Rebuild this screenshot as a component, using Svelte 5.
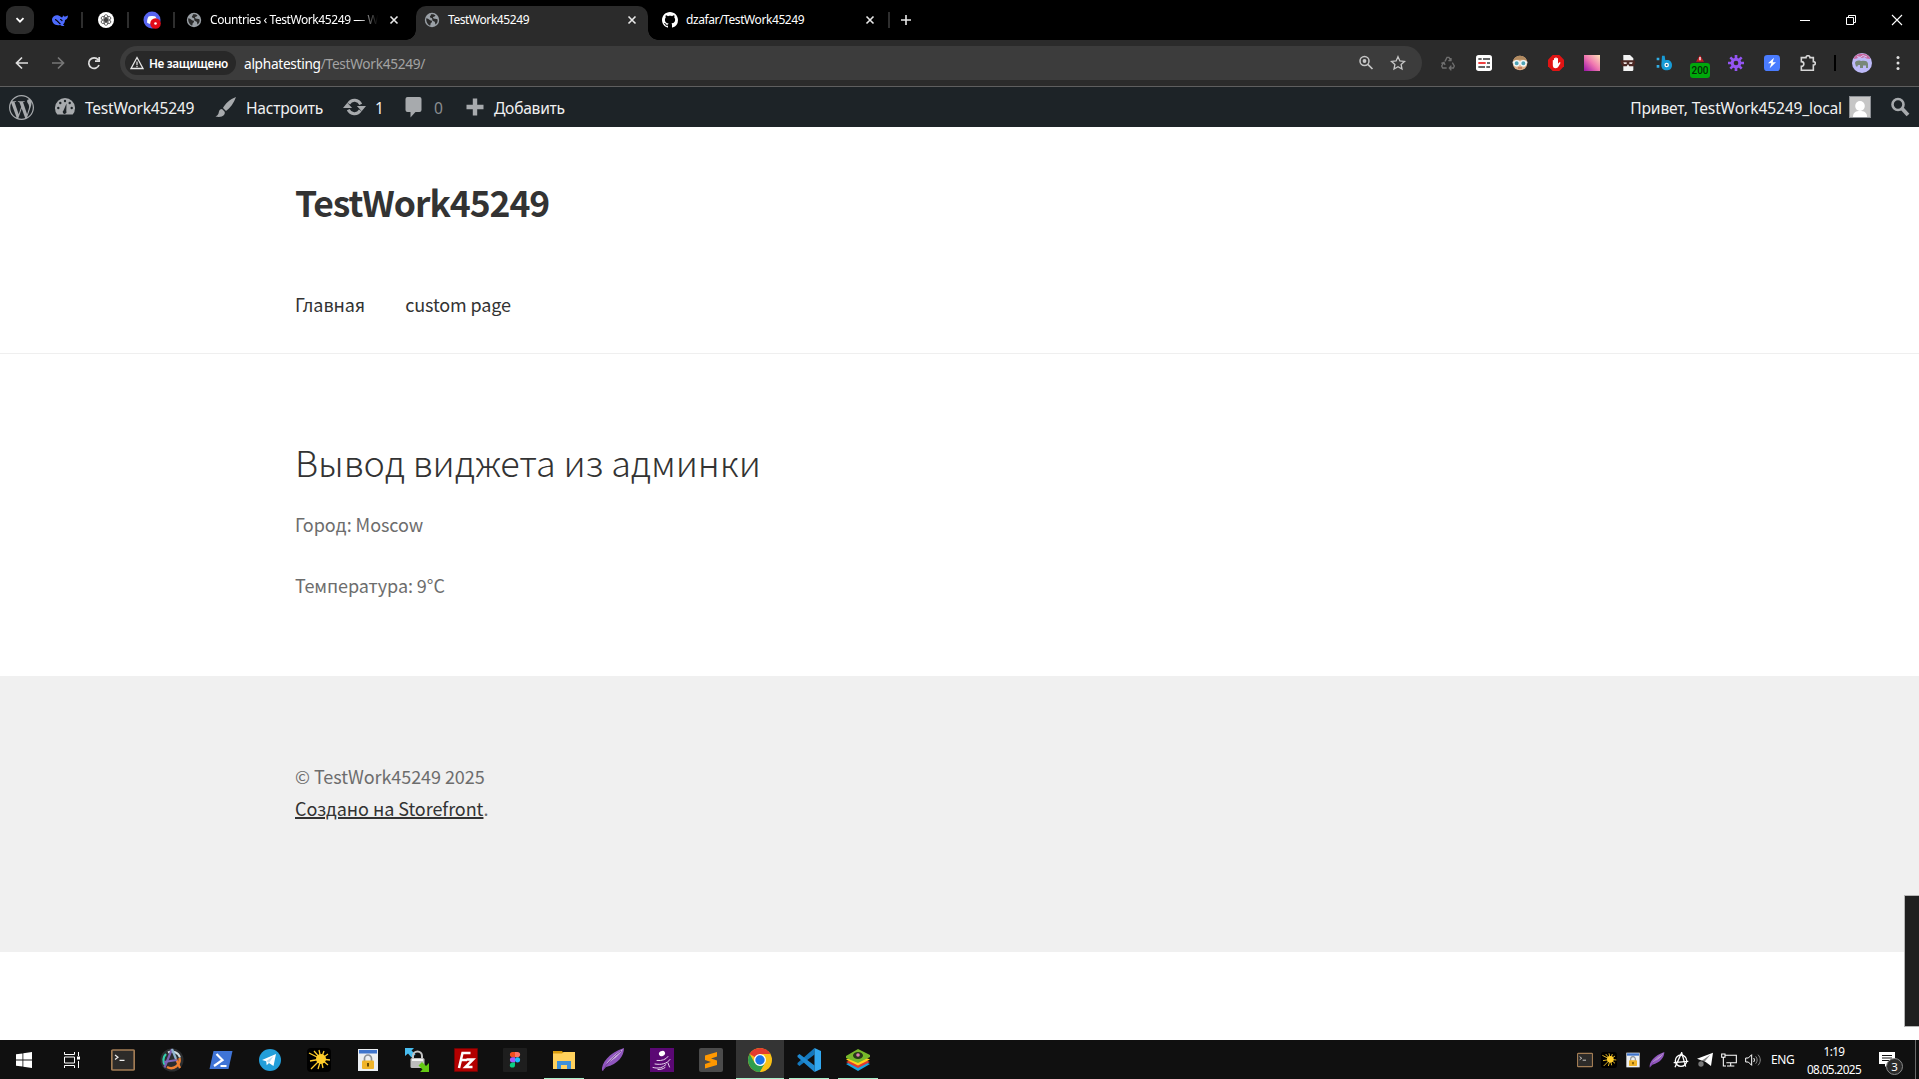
<script>
  const extensions = ['recycle', 'list', 'face', 'hand', 'gradient', 'mask', 'whale', 'alarm', 'gear', 'bolt', 'puzzle'];
  const apps = [
    { icon: 'terminal' },
    { icon: 'agent' },
    { icon: 'powershell' },
    { icon: 'telegram' },
    { icon: 'sun' },
    { icon: 'lockdoc' },
    { icon: 'transfer' },
    { icon: 'filezilla' },
    { icon: 'figma' },
    { icon: 'folder', open: true },
    { icon: 'feather' },
    { icon: 'pipes' },
    { icon: 'sublime' },
    { icon: 'chrome', open: true, focused: true },
    { icon: 'vscode', open: true },
    { icon: 'stacks', open: true },
  ];
  const tray = ['terminal', 'sun', 'lockdoc', 'feather', 'anarchy', 'plane', 'network', 'volume'];
</script>

{#snippet globe()}
  <svg class="i16" viewBox="0 0 16 16">
    <circle cx="8" cy="8" r="7.2" fill="#9aa0a6" />
    <path d="M2.3 6.2c1.4.2 2.2.7 3.1 1.6.8.8 2.2.4 2.6 1.4.3 1-1 1.400-1.400 2.300-.3.8.2 1.700-.6 2C3.600 12.800 1.800 9.400 2.300 6.200zM7 2.300c1.700-.4 3.300.1 4.400 1-.2 1.200-1.500 1.300-2.200 1.800-.7.6.200 1.500 1.200 1.700 1.200.2 2.200 0 3.200.7.3 2-.5 4-2 5-.6-.6-.2-1.600-.8-2.500-.6-.8-1.800-.6-2.300-1.400-.5-.9.1-1.600-.5-2.300C7.400 5.700 6.100 5.900 5.900 5c-.1-.9 1.200-1.300 1.100-2.700z" fill="#2b2b2b" />
  </svg>
{/snippet}

{#snippet close()}
  <svg class="i16" viewBox="0 0 16 16"><path d="M4.500 4.500l7 7M11.500 4.500l-7 7" stroke="#e8e8e8" stroke-width="1.600" /></svg>
{/snippet}

{#snippet icon(name)}
  <svg viewBox="0 0 24 24" class="glyph">
    {#if name === 'recycle'}
      <g fill="none" stroke="#6f6f6f" stroke-width="2">
        <path d="M7.500 9.500l3-6h3l2.500 5M12.500 8.500h4v-4M18.500 11.500l3 5-1.500 3h-6M17 16l-3 3.500L17 23M10 19.500H4l-1.500-3 3-5M2 12.500l4-1.500L7.500 15" />
      </g>
    {:else if name === 'list'}
      <rect width="24" height="24" rx="4" fill="#fff" />
      <path d="M3.500 6h5M10.500 6H21M3.500 18h10M15.500 18H21" stroke="#333" stroke-width="2.200" />
      <path d="M3.500 12h11" stroke="#e33" stroke-width="2.800" /><path d="M16.500 12H21" stroke="#333" stroke-width="2.200" />
    {:else if name === 'face'}
      <circle cx="12" cy="12" r="11" fill="#e0b088" />
      <path d="M2 9C3 3 8 1 12 1s9 2 10 8l-4-2H6z" fill="#b08a60" />
      <path d="M1 11h22" stroke="#e9f2f4" stroke-width="2.500" />
      <circle cx="7" cy="12.500" r="4" fill="#4fa3b5" stroke="#f2f7f8" stroke-width="2" /><circle cx="17" cy="12.500" r="4" fill="#4fa3b5" stroke="#f2f7f8" stroke-width="2" />
      <path d="M9 19.500h6" stroke="#a34c3c" stroke-width="1.500" />
    {:else if name === 'hand'}
      <path d="M7 0h10l7 7v10l-7 7H7l-7-7V7z" fill="#e01414" />
      <path d="M7.200 8a1 1 0 0 1 1.800 0V5.500a1 1 0 0 1 2 0V4.500a1 1 0 0 1 2 0v1a1 1 0 0 1 2 0V13l2-2c1-.8 2 .2 1.500 1.200L16 17c-1 2-2.500 3-4.500 3-3 0-4.300-2-4.300-5z" fill="#fff" />
    {:else if name === 'gradient'}
      <defs><linearGradient id="pinkfade" x1="0" y1="1" x2="1" y2="0"><stop offset="0" stop-color="#9a12a8" /><stop offset=".5" stop-color="#f078b0" /><stop offset="1" stop-color="#ffe3b8" /></linearGradient></defs>
      <rect width="24" height="24" fill="url(#pinkfade)" />
    {:else if name === 'mask'}
      <path d="M5 0h10l5 5v17a2 2 0 0 1-2 2H5z" fill="#f3f3f3" />
      <path d="M1 8h21l1 3-2 6h-7l-2-3-2 3H4L1 12z" fill="#4a2723" />
      <path d="M5 11h5v2.500H6zM14 11h5l-1 2.500h-4z" fill="#e8dedc" />
    {:else if name === 'whale'}
      <path d="M9 1h4l1 7c7-2 10 3 10 7 0 6-4 8-8 8-5 0-8-3-8-8z" fill="#179bd7" />
      <circle cx="16" cy="15" r="3.400" fill="#fff" /><circle cx="16" cy="15" r="1.400" fill="#16587e" />
      <path d="M1 4h4v4H1zM1 15h4v4H1z" fill="#32aee5" />
    {:else if name === 'alarm'}
      <path d="M12 0l6 10H6z" fill="#c21d24" /><path d="M12 3v5" stroke="#fff" stroke-width="2" />
    {:else if name === 'gear'}
      <g stroke="#9455f2" stroke-width="4"><path d="M12 0v24M0 12h24M3.500 3.500l17 17M20.500 3.500l-17 17" /></g>
      <circle cx="12" cy="12" r="8" fill="#9455f2" /><circle cx="12" cy="12" r="3.500" fill="#2b2b2b" />
    {:else if name === 'bolt'}
      <rect width="24" height="24" rx="5" fill="#4a7cff" /><path d="M15 4L6 12.500h5L8.500 20 18 11h-5z" fill="#fff" />
    {:else if name === 'puzzle'}
      <path d="M2 4h7c0-4 6-4 6 0h5v6c4 0 4 5 0 5v8H2v-6c5 0 5-7 0-7z" fill="none" stroke="#d7d7d7" stroke-width="2.400" />
    {:else if name === 'terminal'}
      <rect x=".8" y="2" width="22.400" height="20" rx="1" fill="#2d2b29" stroke="#a27c54" stroke-width="1.700" />
      <path d="M4 7l3 2.300-3 2.300M8.500 12.300h5" fill="none" stroke="#eee" stroke-width="1.200" />
    {:else if name === 'agent'}
      <circle cx="12" cy="12" r="11.500" fill="#2b2d2f" />
      <path d="M5 17a8.500 8.500 0 0 1 1-11" fill="none" stroke="#35d0ad" stroke-width="2.200" />
      <path d="M8 4.500a8.500 8.500 0 0 1 12 5" fill="none" stroke="#cfdbe0" stroke-width="2" />
      <path d="M19.500 10a8.500 8.500 0 0 1-12.500 9" fill="none" stroke="#f08032" stroke-width="2.400" />
      <path d="M12 1L4.500 19.500" stroke="#7b5fb0" stroke-width="2.200" /><path d="M12 1l4 10" stroke="#8fb5cf" stroke-width="2.200" /><path d="M16 11l4 9" stroke="#f08032" stroke-width="2.200" /><path d="M4 14l13-2" stroke="#8068bb" stroke-width="1.800" />
    {:else if name === 'powershell'}
      <path d="M4.500 3h19L19.500 21H.5z" fill="#3f74d6" /><path d="M7.500 6l6 6-8.500 6M11.500 18h6" fill="none" stroke="#fff" stroke-width="2.200" />
    {:else if name === 'telegram'}
      <circle cx="12" cy="12" r="11" fill="#229ed9" /><path d="M4 12l14-6-2.500 12-4.500-3-2.300 2.200-.5-4z" fill="#fff" /><path d="M8.500 13l7-5-4.500 7" fill="#b8dbee" />
    {:else if name === 'sun'}
      <rect width="24" height="24" rx="4" fill="#000" />
      <circle cx="14" cy="11" r="5" fill="#ffcd2b" />
      <path d="M14 11L12 2M14 11l3-8M14 11l7-5M14 11l9 1M14 11l7 6M14 11l2 9M14 11l-3 10M14 11L4 21M14 11L3 13M14 11L2 5M14 11L7 3" stroke="#ffcd2b" stroke-width="1.300" />
    {:else if name === 'lockdoc'}
      <rect x="2" y="1" width="20" height="22" fill="#eceff2" /><rect x="3" y="2" width="18" height="3.500" fill="#3f75cc" />
      <path d="M8.500 13v-2.500a3.500 3.500 0 0 1 7 0V13" fill="none" stroke="#8b9198" stroke-width="1.700" />
      <rect x="6" y="12.500" width="12" height="8.500" rx="1" fill="#f0b429" /><rect x="11" y="15" width="2" height="3.500" fill="#664800" />
    {:else if name === 'transfer'}
      <path d="M0 0h9L6.500 2.500l4 4-4 3-3.500-4L0 8z" fill="#48bdf0" />
      <path d="M8 11V8a4.500 4.500 0 0 1 9 0v3" fill="none" stroke="#c3c3c3" stroke-width="2" />
      <rect x="5.500" y="10" width="14" height="10" rx="1.500" fill="#bcbcbc" /><path d="M7 12h11" stroke="#f3f3f3" stroke-width="2" />
      <path d="M24 24h-9l2.500-2.500-4-4 3.500-3.500 4 4L24 15z" fill="#63c913" />
    {:else if name === 'filezilla'}
      <rect x=".5" y=".5" width="23" height="23" fill="#b30000" stroke="#7e0000" stroke-dasharray="1 1" />
      <path d="M5 20L8.500 5h8M7 12h6M12.500 11.500h6.500l-7.500 7.500h7" fill="none" stroke="#fff" stroke-width="2.500" />
    {:else if name === 'figma'}
      <rect width="24" height="24" rx="1" fill="#1e1e1e" />
      <path d="M12 4H9.500a2.600 2.600 0 0 0 0 5.200H12z" fill="#f24e1e" /><path d="M12 4h2.500a2.600 2.600 0 0 1 0 5.200H12z" fill="#ff7262" />
      <path d="M12 9.200H9.500a2.600 2.600 0 0 0 0 5.200H12z" fill="#a259ff" /><circle cx="14.500" cy="11.800" r="2.600" fill="#1abcfe" />
      <path d="M12 14.400H9.500a2.600 2.600 0 1 0 2.500 2.600z" fill="#0acf83" />
    {:else if name === 'folder'}
      <path d="M1 3h9l2 3h-11z" fill="#d89b0c" /><path d="M1 5.500h9L11.500 4H23v17H1z" fill="#ffd15c" />
      <path d="M5 21v-8h14v8h-4v-4H9v4z" fill="#3d90d9" />
    {:else if name === 'feather'}
      <path d="M1 23C0 15 8 5 23 0c0 8-6 16-18 19z" fill="#9056be" /><path d="M3 19C8 11 14 6 22 1c-4 7-10 11-17 15z" fill="#cdb2e0" /><path d="M1.500 23C6 15 12 9 20 3" fill="none" stroke="#744099" />
    {:else if name === 'pipes'}
      <rect width="24" height="24" fill="#5b0874" /><ellipse cx="12" cy="5.500" rx="3.200" ry="2.500" fill="#fff" transform="rotate(-30 12 5.500)" />
      <path d="M7 12.500c5 .5 9-1 11-4M5 16c6 1 12 0 15-4.500M3 19.500c6 1.500 10 0 13-3M8 21.500c3 0 5-.5 7-2M18 15l1.500 4" fill="none" stroke="#e8d8ee" stroke-width="1" stroke-linecap="round" />
    {:else if name === 'sublime'}
      <rect width="24" height="24" rx="2" fill="#4b4b4b" /><path d="M18 4v4.500L12 10.500l6 2v4.500L6 20.500V16l6-2-6-2V7.500z" fill="#ff9800" />
    {:else if name === 'chrome'}
      <circle cx="12" cy="12" r="12" fill="#fbc116" />
      <path d="M12 12L1.610 6A12 12 0 0 1 22.390 6H12z" fill="#e33b2e" /><path d="M1.610 6A12 12 0 0 0 12 24l5.200-9L12 12l-5.200 3z" fill="#2f9e4f" />
      <path d="M12 24l5.200-9a6 6 0 0 0 0-6h5.190A12 12 0 0 1 12 24z" fill="#fbc116" />
      <circle cx="12" cy="12" r="6" fill="#fff" /><circle cx="12" cy="12" r="4.700" fill="#1b73e8" />
    {:else if name === 'vscode'}
      <path d="M17.500 0v6.500L2.500 18 .5 16.500v-1.500z" fill="#1478bd" /><path d="M17.500 24v-6.500L2.500 6 .5 7.500V9z" fill="#1f8ad2" />
      <path d="M17.500 0L24 3v18l-6.500 3z" fill="#32a8f0" />
    {:else if name === 'stacks'}
      <path d="M0 16l12-5 12 5-12 7z" fill="#1ba3df" /><path d="M0 14l12-5 12 5-12 6z" fill="#e43a2e" /><path d="M0 11.500l12-5 12 5-12 6z" fill="#ffd21c" />
      <path d="M0 8l12-7 12 6v2l-12 6L0 10z" fill="#76b82a" /><ellipse cx="12" cy="7.500" rx="5" ry="3.500" fill="#26351a" /><circle cx="12" cy="7" r="1.800" fill="#db82b2" />
    {:else if name === 'anarchy'}
      <g fill="none" stroke="#fff" stroke-width="2"><circle cx="12" cy="13" r="8.500" /><path d="M3 23L13 1l6 21M1 16l22-2" /></g>
    {:else if name === 'plane'}
      <path d="M0 10L24 1l-3 20-8-6z" fill="#fff" /><path d="M7 13l13-9-9 11v6z" fill="#101010" opacity=".5" /><circle cx="6" cy="18" r="4" fill="#777" />
    {:else if name === 'network'}
      <path d="M6 5h17v11H8M14.500 16v5M9 21h11M1 3h5v5H1zM3.500 8v13h4" fill="none" stroke="#fff" stroke-width="1.600" />
    {:else if name === 'volume'}
      <path d="M1 9h4l5-5v16l-5-5H1z" fill="none" stroke="#fff" stroke-width="1.500" /><path d="M13 9c1.500 2 1.500 4 0 6" fill="none" stroke="#fff" stroke-width="1.500" />
      <path d="M16 6.500c3 3.500 3 7.500 0 11M19.500 4c4.500 5 4.500 11 0 16" fill="none" stroke="#8b8b8b" stroke-width="1.500" />
    {/if}
  </svg>
{/snippet}

<div class="screen">
  <div class="tabstrip">
    <button class="search-tabs" aria-label="Tabs"><svg class="i12" viewBox="0 0 12 12"><path d="M2.500 4.200L6 7.700l3.500-3.500" fill="none" stroke="#fff" stroke-width="1.800" /></svg></button>
    <div class="pinned">
      <svg class="i18" viewBox="0 0 18 18"><path d="M1 8c1-4 6-5 9-2 1 1 2 .4 2-2 .7 1.400 1.500 1.700 2.500 1.500 1-.1 1.500-.9 2.500-1-.2 3-1.500 4-3 4.400 0 2-1 3.600-2 4.600l1.500 1.300c-2 .6-3.500-.2-4.500-.8C4 15 1 12 1 8z" fill="#4d6bfe" /><path d="M4 8.500c2 .5 3.500 3 5.500 4.500M9 8.500c1 0 2 .7 2.200 1.700" fill="none" stroke="#000" stroke-width="1.200" /></svg>
    </div>
    <div class="pinned">
      <svg class="i16" viewBox="0 0 16 16"><circle cx="8" cy="8" r="8" fill="#fff" /><g fill="none" stroke="#333" stroke-width=".7"><ellipse cx="8" cy="5.800" rx="2" ry="3.200" /><ellipse cx="8" cy="5.800" rx="2" ry="3.200" transform="rotate(60 8 8)" /><ellipse cx="8" cy="5.800" rx="2" ry="3.200" transform="rotate(120 8 8)" /><ellipse cx="8" cy="5.800" rx="2" ry="3.200" transform="rotate(180 8 8)" /><ellipse cx="8" cy="5.800" rx="2" ry="3.200" transform="rotate(240 8 8)" /><ellipse cx="8" cy="5.800" rx="2" ry="3.200" transform="rotate(300 8 8)" /></g></svg>
    </div>
    <div class="pinned">
      <svg class="i18" viewBox="0 0 18 18"><circle cx="9" cy="9" r="8.500" fill="#5865f2" /><path d="M4 11.500c0-3 .8-5 1.600-6 1-.7 5.800-.7 6.800 0 .8 1 1.600 3 1.600 6-2.500 2-7.500 2-10 0z" fill="#fff" /><circle cx="12.500" cy="12.500" r="5.300" fill="#e00b18" /><circle cx="12.500" cy="12.500" r="1.300" fill="#fff" /></svg>
    </div>
    <div class="tab first">{@render globe()}<span class="label fade">Countries ‹ TestWork45249 — W</span>{@render close()}</div>
    <div class="tab current">{@render globe()}<span class="label">TestWork45249</span>{@render close()}</div>
    <div class="tab last">
      <svg class="i16" viewBox="0 0 16 16"><path fill="#fff" d="M8 0C3.580 0 0 3.580 0 8c0 3.540 2.290 6.530 5.470 7.590.4.070.55-.17.55-.38 0-.19-.01-.82-.01-1.490-2.010.37-2.530-.49-2.690-.94-.09-.23-.48-.94-.82-1.130-.28-.15-.68-.52-.01-.53.63-.01 1.080.58 1.230.82.72 1.210 1.870.87 2.330.66.070-.52.28-.87.51-1.070-1.780-.2-3.640-.89-3.640-3.950 0-.87.31-1.590.82-2.150-.08-.2-.36-1.020.08-2.120 0 0 .67-.21 2.200.82.64-.18 1.320-.27 2-.27s1.360.09 2 .27c1.530-1.040 2.200-.82 2.200-.82.44 1.100.16 1.920.08 2.120.51.56.82 1.270.82 2.150 0 3.070-1.870 3.750-3.650 3.950.29.25.54.73.54 1.480 0 1.070-.01 1.930-.01 2.200 0 .21.15.46.55.38A8.010 8.010 0 0 0 16 8c0-4.420-3.580-8-8-8z" /></svg>
      <span class="label">dzafar/TestWork45249</span>{@render close()}
    </div>
    <svg class="i12 plus" viewBox="0 0 12 12"><path d="M6 1v10M1 6h10" stroke="#e8e8e8" stroke-width="1.600" /></svg>
    <div class="window-controls">
      <svg class="i12" viewBox="0 0 12 12"><path d="M1 6.500h10" stroke="#fff" /></svg>
      <svg class="i12" viewBox="0 0 12 12"><path d="M1.500 3.500h7v7h-7zM3.500 3.500v-2h7v7h-2" fill="none" stroke="#fff" /></svg>
      <svg class="i12" viewBox="0 0 12 12"><path d="M1 1l10 10M11 1L1 11" stroke="#fff" stroke-width="1.100" /></svg>
    </div>
  </div>

  <div class="toolbar">
    <div class="nav-buttons">
      <svg class="i16" viewBox="0 0 16 16"><path d="M14 8H3M8 2.500L2.500 8 8 13.500" fill="none" stroke="#dedede" stroke-width="1.700" /></svg>
      <svg class="i16" viewBox="0 0 16 16"><path d="M2 8h11M8 2.500L13.500 8 8 13.500" fill="none" stroke="#777" stroke-width="1.700" /></svg>
      <svg class="i16" viewBox="0 0 16 16"><path d="M13 10a5.300 5.300 0 1 1-.8-5.200M13.200 2v4.200H9" fill="none" stroke="#dedede" stroke-width="1.700" /></svg>
    </div>
    <div class="omnibox">
      <div class="chip">
        <svg class="i14" viewBox="0 0 14 14"><path d="M7 1.500L13 12.500H1z" fill="none" stroke="#e8e8e8" stroke-width="1.300" /><path d="M7 5.500v3.500M7 9.800v1.400" stroke="#e8e8e8" stroke-width="1.200" /></svg>
        <span>Не защищено</span>
      </div>
      <span class="url">alphatesting<i>/TestWork45249/</i></span>
      <svg class="i16 zoom" viewBox="0 0 16 16"><circle cx="6.500" cy="6" r="4.500" fill="none" stroke="#c7c7c7" stroke-width="1.500" /><circle cx="6.500" cy="6" r="1.900" fill="#c7c7c7" /><path d="M9.800 9.300l4.700 4.700" stroke="#c7c7c7" stroke-width="1.700" /></svg>
      <svg class="i16" viewBox="0 0 16 16"><path d="M8 1.700l1.900 4.200 4.600.5-3.400 3.100.9 4.500-4-2.300-4 2.300.9-4.500L1.500 6.400l4.600-.5z" fill="none" stroke="#c7c7c7" stroke-width="1.300" /></svg>
    </div>
    <div class="extensions">
      {#each extensions as name}
        <div class="ext">{@render icon(name)}{#if name === 'alarm'}<span class="count">200</span>{/if}</div>
      {/each}
    </div>
    <div class="divider"></div>
    <svg class="profile" viewBox="0 0 20 20">
      <circle cx="10" cy="10" r="10" fill="#bdbaf8" /><path d="M1.500 6C4-1 16-1 18.500 6l-4-.5-2-1.500-2.500 1-3-1.500-2 2z" fill="#c96aa0" /><path d="M5 3.500l3 1 3-2 4 1.500" stroke="#d8c4f0" fill="none" />
      <path d="M3 10c0-2 3-3 6-2 4-1 7 0 7 3v4h-2v-2.500h-3V15H8v-3c-2 0-2.500 0-2.500 1.500H4z" fill="#788878" />
    </svg>
    <svg class="i16 menu" viewBox="0 0 16 16"><g fill="#e0e0e0"><circle cx="8" cy="2.500" r="1.500" /><circle cx="8" cy="8" r="1.500" /><circle cx="8" cy="13.500" r="1.500" /></g></svg>
  </div>

  <div class="adminbar">
    <svg class="wp" viewBox="0 0 24 24"><path fill="#a7aaad" d="M21.469 6.825c.84 1.537 1.318 3.300 1.318 5.175 0 3.979-2.156 7.456-5.363 9.325l3.295-9.527c.615-1.540.820-2.771.820-3.864 0-.405-.026-.780-.070-1.110m-7.981.105c.647-.030 1.232-.105 1.232-.105.582-.075.514-.930-.067-.899 0 0-1.755.135-2.880.135-1.064 0-2.850-.150-2.850-.150-.585-.030-.661.855-.075.885 0 0 .540.061 1.125.090l1.680 4.605-2.370 7.080L5.354 6.900c.649-.030 1.234-.100 1.234-.100.585-.075.516-.930-.065-.896 0 0-1.746.138-2.874.138-.200 0-.438-.008-.690-.015C4.911 3.150 8.235 1.215 12 1.215c2.809 0 5.365 1.072 7.286 2.833-.046-.003-.091-.009-.141-.009-1.060 0-1.812.923-1.812 1.914 0 .890.513 1.643 1.060 2.531.411.720.890 1.643.890 2.977 0 .915-.354 1.994-.821 3.479l-1.075 3.585-3.900-11.610.001.014zM12 22.784c-1.059 0-2.081-.153-3.048-.437l3.237-9.406 3.315 9.087c.024.053.050.101.078.149-1.120.393-2.325.609-3.582.609M1.211 12c0-1.564.336-3.050.935-4.390L7.290 21.709C3.694 19.960 1.212 16.271 1.211 12M12 0C5.385 0 0 5.385 0 12s5.385 12 12 12 12-5.385 12-12S18.615 0 12 0" /></svg>
    <div class="item site">
      <svg class="i22" viewBox="0 0 22 22"><path d="M3.300 18.500A10 10 0 1 1 18.700 18.500z" fill="#a7aaad" /><g fill="#1d2327"><circle cx="11" cy="5" r="1.200" /><circle cx="6.300" cy="7" r="1.200" /><circle cx="15.700" cy="7" r="1.200" /><circle cx="4.300" cy="12" r="1.200" /><circle cx="17.700" cy="12" r="1.200" /><path d="M12.500 7.500l-.2 7.500a1.900 1.900 0 1 1-2.800-.6z" /></g></svg>
      <span>TestWork45249</span>
    </div>
    <div class="item customize">
      <svg class="i22" viewBox="0 0 22 22"><path d="M21 1C15 3 10 8 8 12l3 3c4-3 8-8 10-14zM7 13c-3 0-3 3-3.500 4.500C3 19 1.500 20 .5 20.500c3 1 7 .5 8.500-1.500 1-1.300 1-2.500.5-3.500z" fill="#a7aaad" /></svg>
      <span>Настроить</span>
    </div>
    <div class="item updates">
      <svg class="i22 wide" viewBox="0 0 24 22"><path d="M6 7.500a7 7 0 0 1 12.500.8M18 14.500a7 7 0 0 1-12.500-.8" fill="none" stroke="#a7aaad" stroke-width="3.200" /><path d="M0 12l4.500-5.500L9.500 12zM24 10l-4.500 5.500L14.500 10z" fill="#a7aaad" /></svg>
      <span>1</span>
    </div>
    <div class="item comments">
      <svg class="i22" viewBox="0 0 22 22"><path d="M4.500 1h12a2 2 0 0 1 2 2v11a2 2 0 0 1-2 2h-4l-5 5.500V16h-3a2 2 0 0 1-2-2V3a2 2 0 0 1 2-2z" fill="#a7aaad" /></svg>
      <span class="zero">0</span>
    </div>
    <div class="item add">
      <svg class="i18" viewBox="0 0 18 18"><path d="M9 .5v17M.5 9h17" stroke="#a7aaad" stroke-width="4.400" /></svg>
      <span>Добавить</span>
    </div>
    <div class="account">
      <span>Привет, TestWork45249_local</span>
      <svg class="avatar" viewBox="0 0 22 22"><path d="M0 0h22v22H0z" fill="#8c8f94" /><path d="M1 1h20v20H1z" fill="#c6c6c6" /><ellipse cx="11" cy="10" rx="4.800" ry="5" fill="#fff" /><path d="M4 21c0-5 3-6 7-6s7 1 7 6z" fill="#fff" /></svg>
      <svg class="i20" viewBox="0 0 20 20"><circle cx="8" cy="7.500" r="5.500" fill="none" stroke="#a7aaad" stroke-width="2.600" /><path d="M12 11.500l6 6.500" stroke="#a7aaad" stroke-width="3.800" /></svg>
    </div>
  </div>

  <div class="page">
    <header>
      <div class="brand">TestWork45249</div>
      <nav><span>Главная</span><span>custom page</span></nav>
    </header>
    <main>
      <h1>Вывод виджета из админки</h1>
      <p>Город: Moscow</p>
      <p>Температура: 9°C</p>
    </main>
    <footer>
      <div>© TestWork45249 2025</div>
      <div><span class="link">Создано на Storefront</span>.</div>
    </footer>
    <div class="side-panel"></div>
  </div>

  <div class="taskbar">
    <div class="sys"><svg class="i16" viewBox="0 0 16 16"><path d="M0 2.300L6.500 1.400v6.200H0zM7.300 1.300L16 0v7.600H7.300zM0 8.400h6.500v6.200L0 13.700zM7.300 8.400H16V16l-8.700-1.300z" fill="#fff" /></svg></div>
    <div class="sys"><svg class="i16" viewBox="0 0 16 16"><path d="M.5 0v2.500h10V0M.5 16v-2.500h10V16M.5 5h10v6H.5zM14.500 0v4M14.500 9v7" fill="none" stroke="#fff" /><path d="M13 4.500h3v3h-3z" fill="#fff" /></svg></div>
    <div class="apps">
      {#each apps as app}
        <div class="app" class:open={app.open} class:focused={app.focused}>{@render icon(app.icon)}</div>
      {/each}
    </div>
    <div class="tray">
      {#each tray as name}
        <div class="tray-icon">{@render icon(name)}</div>
      {/each}
    </div>
    <span class="lang">ENG</span>
    <div class="clock"><span>1:19</span><span>08.05.2025</span></div>
    <div class="notices">
      <svg viewBox="0 0 16 16"><path d="M0 0h16v12H9l-3 3v-3H0z" fill="#fff" /><path d="M3 3.500h10M3 6h10M3 8.500h7" stroke="#101010" /></svg>
      <span class="badge">3</span>
    </div>
    <div class="peek"></div>
  </div>
</div>

<style>
  :global(body) { overflow: hidden; }
  .screen { width: 1919px; height: 1079px; display: flex; flex-direction: column; background: #fff; font-family: "Noto Sans", sans-serif; overflow: hidden; }
  svg { display: block; flex: none; }
  .i12 { width: 12px; height: 12px; }
  .i14 { width: 14px; height: 14px; }
  .i16 { width: 16px; height: 16px; }
  .i18 { width: 18px; height: 18px; }
  .i20 { width: 20px; height: 20px; }
  .i22 { width: 22px; height: 22px; }
  .glyph { width: 100%; height: 100%; }

  .tabstrip { height: 40px; flex: none; background: #000; display: flex; align-items: center; color: #fff; font-size: 12px; letter-spacing: -0.420px; }
  .search-tabs { width: 28px; height: 28px; margin-left: 6px; margin-right: 3px; padding: 0; border: 0; border-radius: 9px; background: #2b2b2b; display: grid; place-items: center; flex: none; }
  .pinned { width: 46px; height: 16px; display: flex; align-items: center; justify-content: center; box-sizing: border-box; padding-left: 2px; border-right: 2px solid #2e2e2e; flex: none; }
  .tab { display: flex; align-items: center; box-sizing: border-box; height: 34px; flex: none; }
  .label { flex: 1; white-space: nowrap; line-height: 20px; }
  .first { width: 241px; padding: 0 14px 0 11px; }
  .first .label { margin-left: 8px; margin-right: 8px; }
  .fade { mask-image: linear-gradient(90deg, #000 148px, transparent 168px); }
  .current { width: 232px; align-self: flex-end; padding: 0 8px 6px; background: #2b2b2b; border-radius: 10px 10px 0 0; position: relative; }
  .current .label, .last .label { margin-left: 8px; }
  .current::before, .current::after { content: ""; position: absolute; bottom: 0; width: 10px; height: 10px; }
  .current::before { left: -10px; background: radial-gradient(circle at 0 0, transparent 9.500px, #2b2b2b 10px); }
  .current::after { right: -10px; background: radial-gradient(circle at 100% 0, transparent 9.500px, #2b2b2b 10px); }
  .last { width: 242px; height: 16px; padding: 0 10px 0 14px; border-right: 2px solid #2e2e2e; }
  .plus { margin-left: 10px; }
  .window-controls { margin-left: auto; display: flex; gap: 34px; padding-right: 16px; }

  .toolbar { height: 47px; flex: none; box-sizing: border-box; background: #2b2b2b; border-bottom: 1px solid #5f5f5f; display: flex; align-items: center; }
  .nav-buttons { width: 120px; box-sizing: border-box; padding-left: 14px; display: flex; gap: 20px; flex: none; }
  .omnibox { width: 1302px; height: 34px; box-sizing: border-box; border-radius: 17px; background: #3c3c3c; display: flex; align-items: center; padding: 0 16px 0 5px; flex: none; }
  .chip { width: 111px; height: 24px; box-sizing: border-box; border-radius: 12px; background: #282828; display: flex; align-items: center; gap: 5px; padding-left: 5px; color: #fff; font-size: 11.800px; letter-spacing: -0.350px; font-weight: 600; white-space: nowrap; }
  .url { color: #fff; font-size: 13.700px; letter-spacing: -0.300px; margin-left: 8px; }
  .url i { font-style: normal; color: #a3a3a3; }
  .zoom { margin-left: auto; margin-right: 16px; }
  .extensions { display: flex; margin-left: 8px; }
  .ext { width: 36px; height: 16px; padding: 0 10px; box-sizing: border-box; position: relative; }
  .count { position: absolute; left: 8px; top: 8px; width: 20px; height: 15px; border-radius: 3px; background: #00a80b; color: #042c05; font: 500 10px/15px Roboto, sans-serif; text-align: center; }
  .divider { width: 2px; height: 16px; background: #000; margin-left: 8px; }
  .profile { width: 20px; height: 20px; margin-left: 16px; }
  .menu { margin-left: 18px; }

  .adminbar { height: 40px; flex: none; background: #1d2327; color: #f0f0f1; font-size: 15.600px; letter-spacing: -0.250px; display: flex; align-items: center; line-height: 40px; }
  .adminbar span { padding-top: 1px; }
  .wp { width: 25px; height: 25px; margin-left: 9px; margin-right: 20px; }
  .item { display: flex; align-items: center; white-space: nowrap; flex: none; }
  .site { width: 161px; gap: 9px; }
  .customize { width: 128px; gap: 9px; }
  .updates { width: 60px; gap: 9px; }
  .updates .wide { width: 23px; }
  .comments { width: 63px; gap: 9px; }
  .zero { color: #8a8d90; }
  .add { gap: 10px; }
  .account { margin-left: auto; display: flex; align-items: center; padding-right: 9px; letter-spacing: -0.150px; }
  .avatar { width: 22px; height: 24px; margin-left: 7px; margin-right: 19px; }

  .page { flex: 1; position: relative; font: 18px/32px "Noto Sans CJK SC", "Noto Sans", sans-serif; letter-spacing: -0.060px; color: #6d6d6d; }
  header { height: 227px; box-sizing: border-box; border-bottom: 1px solid #efefef; padding: 55px 0 0 295px; color: #333; }
  .brand { font-size: 35.500px; line-height: 40px; font-weight: 700; letter-spacing: -1.050px; }
  nav { display: flex; gap: 40px; margin-top: 66px; }
  nav span + span { letter-spacing: -0.120px; }
  main { height: 322px; box-sizing: border-box; padding: 84px 0 0 295px; }
  h1 { margin: 0 0 24px; font-size: 36px; line-height: 46px; font-weight: 300; letter-spacing: -0.080px; color: #333; }
  p { margin: 0 0 29px; }
  footer { height: 276px; box-sizing: border-box; background: #f0f0f0; padding: 84px 0 0 295px; }
  .link { color: #333; text-decoration: underline; text-decoration-thickness: 2px; text-underline-offset: 1px; }
  .side-panel { position: absolute; right: 0; top: 768px; width: 15px; height: 132px; box-sizing: border-box; background: #1f1f1f; border: 1px solid #b5b5b5; border-right: 0; }

  .taskbar { height: 39px; flex: none; background: #101010; color: #fff; display: flex; align-items: center; font-size: 12px; }
  .sys { width: 48px; display: flex; justify-content: center; flex: none; }
  .apps { display: flex; gap: 1px; margin-left: 3px; }
  .app { width: 48px; height: 39px; box-sizing: border-box; padding: 8px 12px 7px; flex: none; position: relative; }
  .app.focused { background: #343434; }
  .app.open::after { content: ""; position: absolute; left: 4px; right: 4px; bottom: 0; height: 1px; background: #a5f0c8; }
  .app.focused::after { left: 0; right: 0; }
  .tray { margin-left: auto; display: flex; }
  .tray-icon { width: 24px; height: 16px; padding: 0 4px; box-sizing: border-box; }
  .lang { margin-left: 6px; width: 23px; letter-spacing: -0.450px; }
  .clock { width: 80px; display: flex; flex-direction: column; align-items: center; line-height: 18px; font-size: 11.800px; letter-spacing: -0.620px; }
  .notices { width: 16px; height: 16px; margin-left: 5px; position: relative; }
  .badge { position: absolute; left: 7px; top: 6px; width: 15px; height: 15px; border: 1px solid #8a8a8a; border-radius: 50%; background: #2a2a2a; text-align: center; line-height: 15px; font-size: 11.500px; }
  .peek { width: 1px; height: 39px; background: #6a6a6a; margin-left: 20px; margin-right: 3px; }
</style>
